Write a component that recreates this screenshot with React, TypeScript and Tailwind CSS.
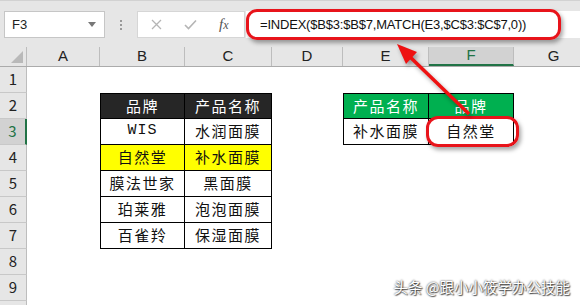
import React from 'react'

const cols = [
  { key: 'A', w: 'w-[73px]' },
  { key: 'B', w: 'w-[85px]' },
  { key: 'C', w: 'w-[87px]' },
  { key: 'D', w: 'w-[71px]' },
  { key: 'E', w: 'w-[86px]' },
  { key: 'F', w: 'w-[85px]' },
  { key: 'G', w: 'w-[80px]' },
]

type Cell = { text?: string; cls?: string; mark?: boolean }

// row number -> cells by column letter
const sheet: Record<number, Record<string, Cell>> = {
  2: {
    B: { text: '品牌', cls: 'bg-[#262626] text-white border-l border-t border-r border-b border-black' },
    C: { text: '产品名称', cls: 'bg-[#262626] text-white border-t border-r border-b border-black' },
    E: { text: '产品名称', cls: 'bg-[#00b050] text-white border-l border-t border-r border-b border-black' },
    F: { text: '品牌', cls: 'bg-[#00b050] text-white border-t border-r border-b border-black' },
  },
  3: {
    B: { text: 'WIS', cls: "border-l border-r border-b border-black font-['Liberation_Mono'] tracking-[1px]" },
    C: { text: '水润面膜', cls: 'border-r border-b border-black' },
    E: { text: '补水面膜', cls: 'border-l border-r border-b border-black' },
    F: { text: '自然堂', cls: 'border-r border-b border-black', mark: true },
  },
  4: {
    B: { text: '自然堂', cls: 'bg-[#ffff00] border-l border-r border-b border-black' },
    C: { text: '补水面膜', cls: 'bg-[#ffff00] border-r border-b border-black' },
  },
  5: {
    B: { text: '膜法世家', cls: 'border-l border-r border-b border-black' },
    C: { text: '黑面膜', cls: 'border-r border-b border-black' },
  },
  6: {
    B: { text: '珀莱雅', cls: 'border-l border-r border-b border-black' },
    C: { text: '泡泡面膜', cls: 'border-r border-b border-black' },
  },
  7: {
    B: { text: '百雀羚', cls: 'border-l border-r border-b border-black' },
    C: { text: '保湿面膜', cls: 'border-r border-b border-black' },
  },
}

function FormulaBar() {
  return (
    <div className="h-[47px] bg-[#e6e6e6] border-t border-[#d2d2d2] flex items-start pt-[10px]">
      {/* Name box */}
      <div className="ml-[4px] w-[101px] h-[27px] bg-white border border-[#c6c6c6] flex items-center justify-between pl-[7px] pr-[8px]">
        <span className="text-[13px] text-[#222]">F3</span>
        <span className="w-0 h-0 border-l-[4px] border-r-[4px] border-t-[5px] border-l-transparent border-r-transparent border-t-[#777]" />
      </div>
      <div className="w-[32px] h-[27px] flex flex-col items-center justify-center gap-[2px]">
        <span className="w-[2px] h-[2px] bg-[#999]" />
        <span className="w-[2px] h-[2px] bg-[#999]" />
        <span className="w-[2px] h-[2px] bg-[#999]" />
      </div>
      {/* Cancel / Enter / fx */}
      <div className="w-[108px] h-[27px] bg-white border border-[#d6d6d6] flex items-center pl-[13px] gap-[22px]">
        <svg width="11" height="11" viewBox="0 0 11 11">
          <path d="M1 1L10 10M10 1L1 10" stroke="#b5b5b5" strokeWidth="1.3" fill="none" />
        </svg>
        <svg width="13" height="11" viewBox="0 0 13 11">
          <path d="M1 6L4.5 9.5L12 1.5" stroke="#b5b5b5" strokeWidth="1.6" fill="none" />
        </svg>
        <span className="font-['Liberation_Serif'] italic text-[15px] text-[#555] leading-none">
          f<span className="text-[12px]">x</span>
        </span>
      </div>
      {/* Formula input */}
      <div className="flex-1 h-[27px] bg-white ml-[1px]">
        <div className="-mt-[2px] w-[315px] h-[31px] border-[3px] border-[#e8141b] rounded-[11px] shadow-[2px_3px_4px_rgba(0,0,0,0.35)] flex items-center pl-[11px]">
          <span className="text-[13px] tracking-[-0.2px] text-[#111]">=INDEX($B$3:$B$7,MATCH(E3,$C$3:$C$7,0))</span>
        </div>
      </div>
    </div>
  )
}

function ColumnHeaders() {
  return (
    <div className="flex h-[20px] bg-[#e6e6e6] border-b border-[#ababab]">
      <div className="w-[27px] shrink-0 border-r border-[#bdbdbd] flex items-end justify-end pr-[3px] pb-[3px]">
        <svg width="12" height="12" viewBox="0 0 12 12">
          <polygon points="12,0 12,12 0,12" fill="#b9b9b9" />
        </svg>
      </div>
      {cols.map((c) => (
        <div
          key={c.key}
          className={`${c.w} shrink-0 flex items-center justify-center text-[15px] ${
            c.key === 'F'
              ? 'bg-[#d2d2d2] text-[#217346] border-b-2 border-[#217346] border-r border-r-[#bdbdbd]'
              : 'text-[#222] border-r border-[#bdbdbd]'
          }`}
        >
          {c.key}
        </div>
      ))}
    </div>
  )
}

function Row({ n }: { n: number }) {
  const cells = sheet[n] ?? {}
  const active = n === 3
  return (
    <div className="flex h-[26px]">
      <div
        className={`w-[27px] shrink-0 flex items-center justify-center text-[15px] border-b border-[#c8c8c8] ${
          active ? 'bg-[#d2d2d2] text-[#217346] border-r-2 border-r-[#217346]' : 'bg-[#e6e6e6] text-[#222] border-r border-r-[#bdbdbd]'
        }`}
      >
        {n < 10 ? n : ''}
      </div>
      {cols.map((c) => {
        const cell = cells[c.key]
        return (
          <div
            key={c.key}
            className={`${c.w} shrink-0 relative flex items-center justify-center text-[15px] tracking-[1.5px] text-[#111] ${cell?.cls ?? ''}`}
          >
            {cell?.text}
            {cell?.mark && (
              <div className="absolute -left-[3px] -top-[3px] w-[93px] h-[31px] border-[3px] border-[#e8141b] rounded-[12px] shadow-[2px_3px_4px_rgba(0,0,0,0.35)]" />
            )}
          </div>
        )
      })}
    </div>
  )
}

export default function App() {
  return (
    <div className="relative w-[580px] h-[305px] overflow-hidden bg-white font-['Liberation_Sans','Noto_Sans_CJK_SC',sans-serif]">
      <FormulaBar />
      <ColumnHeaders />
      <div className="font-['Noto_Sans_CJK_SC',sans-serif]">
        {[1, 2, 3, 4, 5, 6, 7, 8, 9, 10].map((n) => (
          <Row key={n} n={n} />
        ))}
      </div>

      {/* arrow pointing from F3 to the formula */}
      <svg
        className="absolute left-0 top-0 pointer-events-none drop-shadow-[2px_3px_2px_rgba(0,0,0,0.35)]"
        width="580"
        height="305"
        viewBox="0 0 580 305"
      >
        <line x1="469" y1="114" x2="408" y2="55" stroke="#ee1111" strokeWidth="3.5" />
        <polygon points="397,44 417,52 406,64" fill="#ee1111" />
      </svg>

      <div className="absolute right-[10px] bottom-[7px] text-[14.5px] text-white font-['Noto_Sans_CJK_SC',sans-serif] [text-shadow:0_0_2px_rgba(0,0,0,0.9),1px_1px_1px_rgba(0,0,0,0.6)]">
        头条 @跟小小筱学办公技能
      </div>
    </div>
  )
}
